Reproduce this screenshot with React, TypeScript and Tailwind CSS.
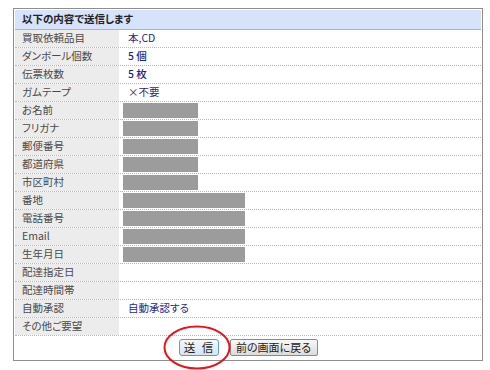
import React from 'react';

type Row = {
  label: string;
  value?: string;
  bold?: boolean;
  box?: 'short' | 'long';
};

const rows: Row[] = [
  { label: '買取依頼品目', value: '本,CD' },
  { label: 'ダンボール個数', value: '5 個', bold: true },
  { label: '伝票枚数', value: '5 枚', bold: true },
  { label: 'ガムテープ', value: '×不要' },
  { label: 'お名前', box: 'short' },
  { label: 'フリガナ', box: 'short' },
  { label: '郵便番号', box: 'short' },
  { label: '都道府県', box: 'short' },
  { label: '市区町村', box: 'short' },
  { label: '番地', box: 'long' },
  { label: '電話番号', box: 'long' },
  { label: 'Email', box: 'long' },
  { label: '生年月日', box: 'long' },
  { label: '配達指定日' },
  { label: '配達時間帯' },
  { label: '自動承認', value: '自動承認する' },
  { label: 'その他ご要望' },
];

function App() {
  return (
    <div className="relative w-[490px] h-[370px] bg-white pt-[8px] pl-[13px] font-['Noto_Sans_CJK_JP','Liberation_Sans',sans-serif] [font-feature-settings:'palt']">
      <div className="w-[470px] border border-[#8e8e8e] p-px">
        {/* Header */}
        <div className="h-[20px] bg-[#d7e3fa] border-b border-[#b4b4b4] flex items-center pl-[7px] text-[10.5px] font-bold text-[#222] leading-none">
          以下の内容で送信します
        </div>

        {rows.map((row) => (
          <div key={row.label} className="h-[18px] flex border-b border-dotted border-[#b8b8b8]">
            <div className="w-[104px] bg-[#ececec] flex items-center pl-[7px] text-[10.5px] text-[#4a4a4a] leading-none">
              {row.label}
            </div>
            <div className="flex-1 flex items-center pl-[4px]">
              {row.box === 'short' && <div className="w-[75px] h-[15px] bg-[#9c9c9c]" />}
              {row.box === 'long' && <div className="w-[122px] h-[15px] bg-[#9c9c9c]" />}
              {row.value && (
                <span
                  className={`pl-[5px] text-[10.5px] leading-none text-[#1f1f8a] ${
                    row.bold ? 'font-medium' : ''
                  }`}
                >
                  {row.value}
                </span>
              )}
            </div>
          </div>
        ))}

        {/* Buttons */}
        <div className="h-[23px] flex items-center justify-center gap-[11px]">
          <button className="w-[40px] h-[17px] rounded-[3px] border border-[#5a9ccf] bg-gradient-to-b from-[#f4f8fb] to-[#d6e3ee] text-[11.5px] leading-none text-[#222] tracking-[2px] pl-[2px]">
            送 信
          </button>
          <button className="w-[88px] h-[17px] rounded-[2px] border border-[#8a8a8a] bg-gradient-to-b from-[#f7f7f7] to-[#dcdcdc] text-[11px] leading-none text-[#222]">
            前の画面に戻る
          </button>
        </div>
      </div>

      {/* red highlight ring */}
      <svg className="absolute left-[163px] top-[325px]" width="68" height="45" viewBox="0 0 68 45">
        <ellipse cx="34" cy="22.5" rx="32.5" ry="21" fill="none" stroke="#e8141c" strokeWidth="2" />
      </svg>
    </div>
  );
}

export default App;
